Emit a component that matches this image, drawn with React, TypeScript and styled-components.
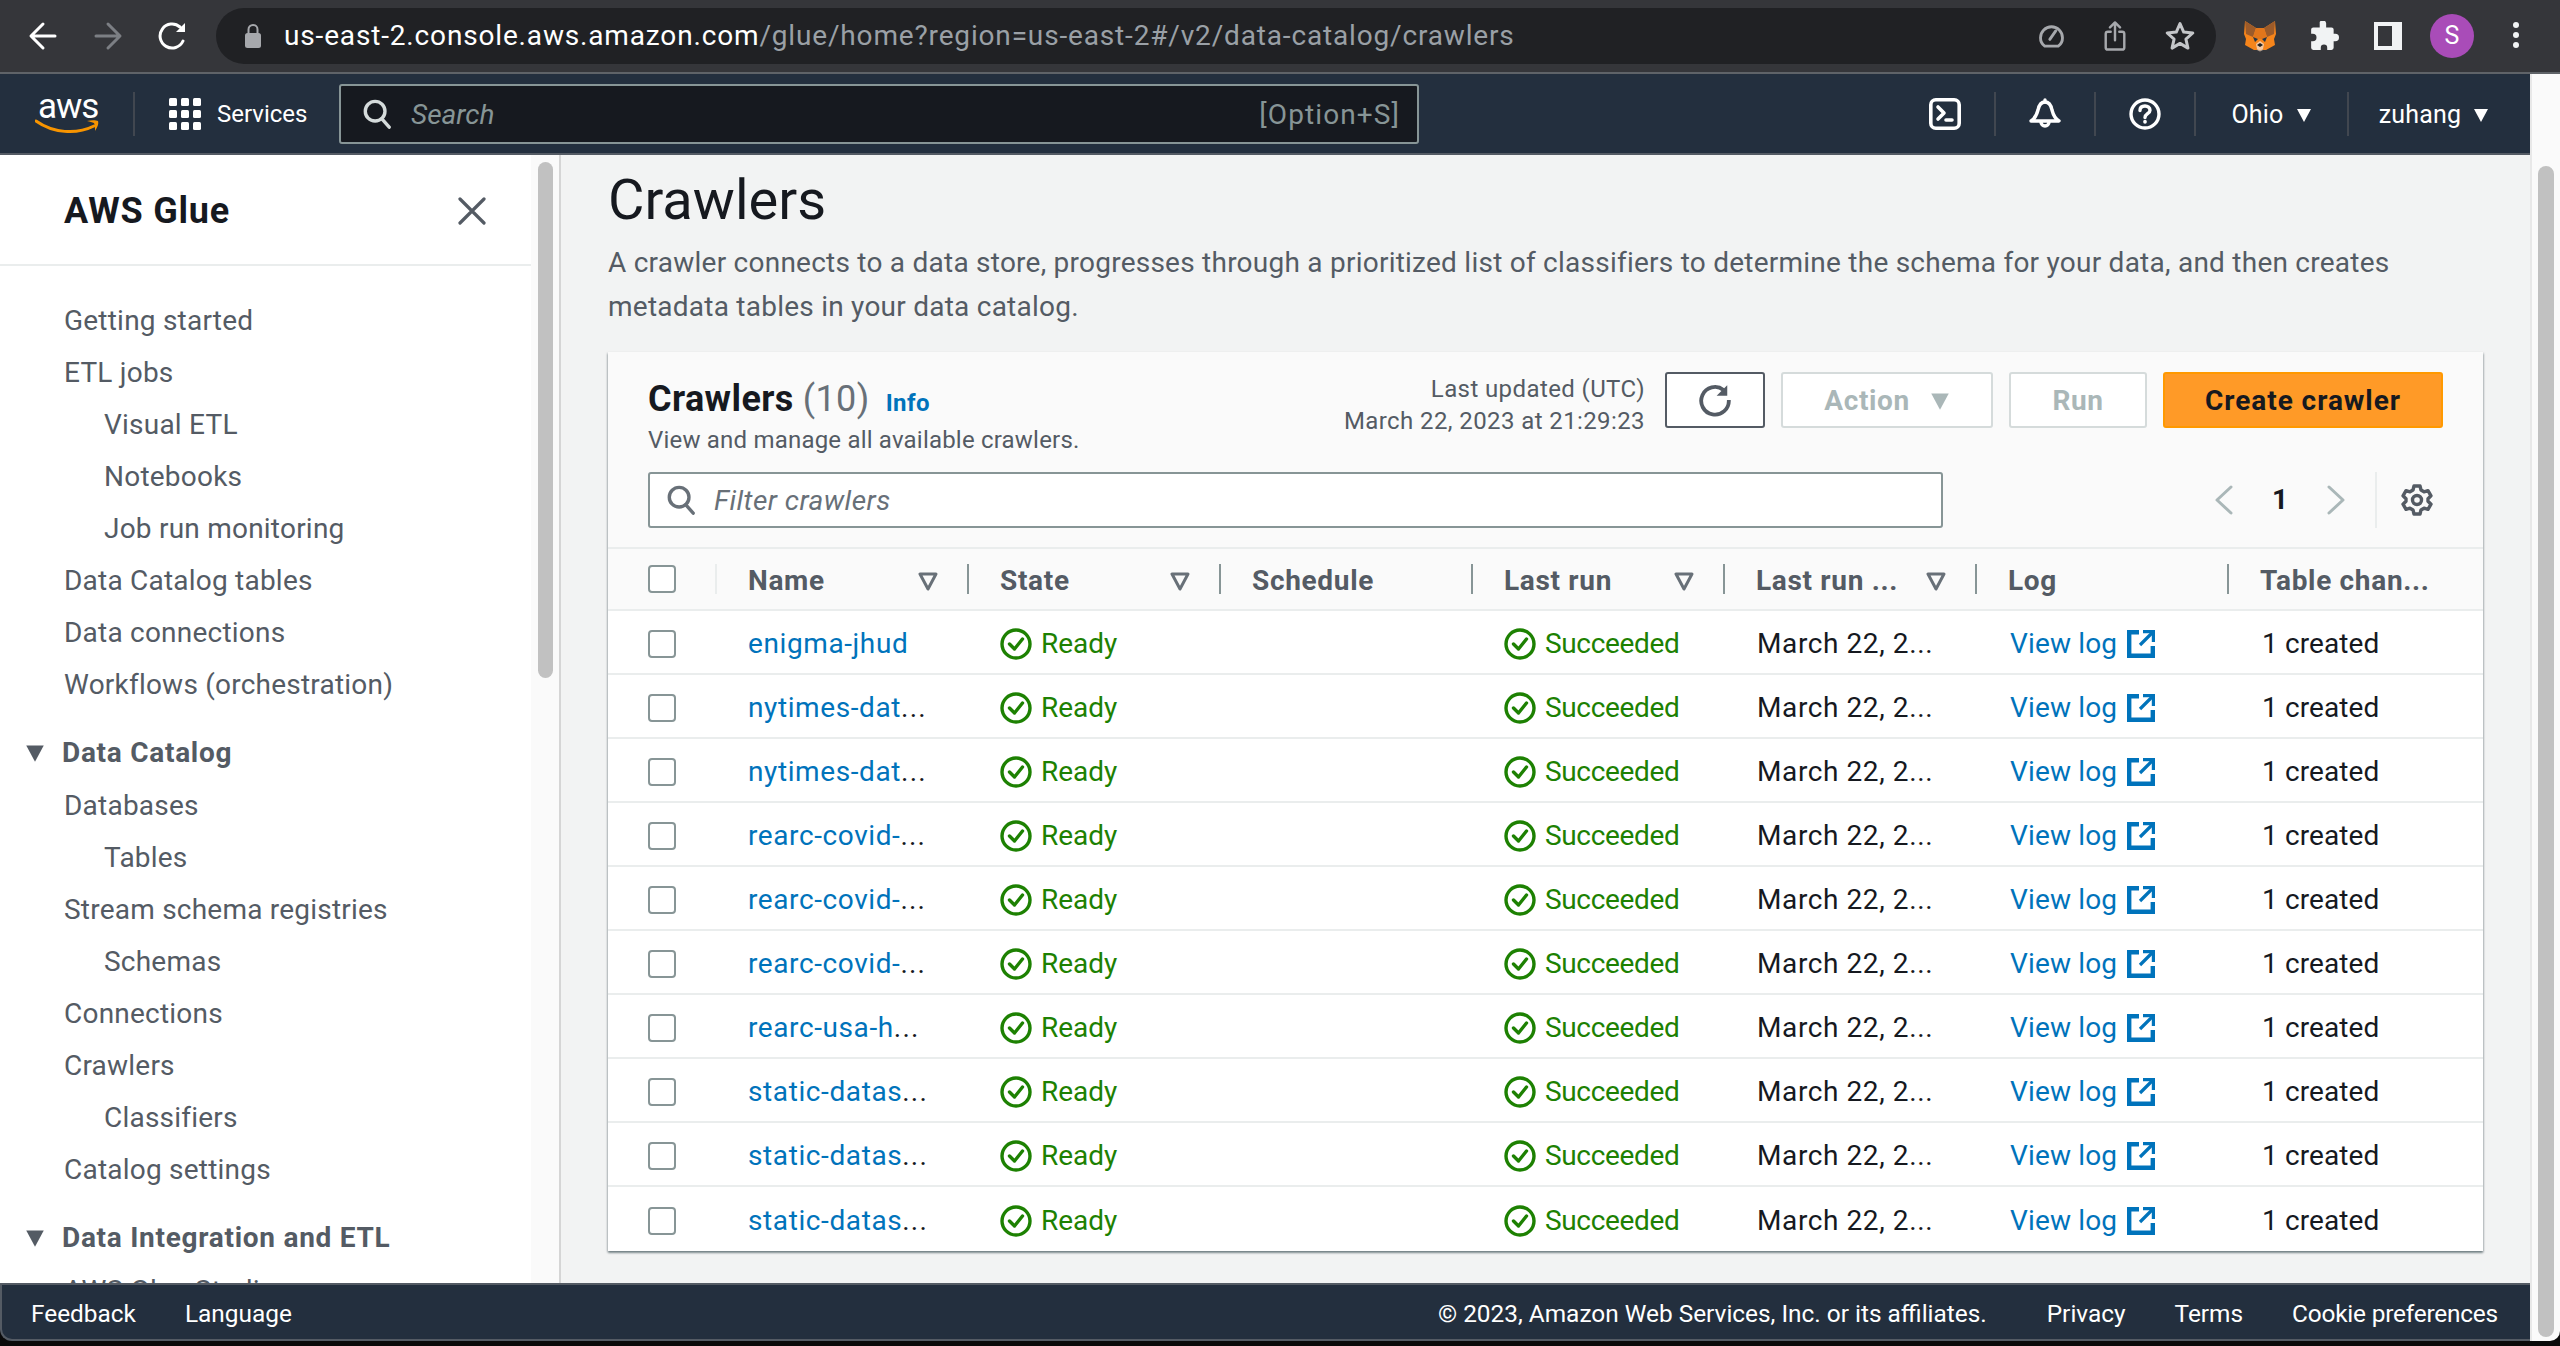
import React from "react";
import styled, { createGlobalStyle } from "styled-components";

const UI = `Roboto, "Open Sans", "Liberation Sans", sans-serif`;

const Global = createGlobalStyle`
  html, body { margin: 0; padding: 0; background: #000; }
  body { font-family: ${UI}; color: #16191f; overflow: hidden; }
  * { box-sizing: border-box; }
`;

const App_ = styled.div`
  width: 2560px;
  height: 1346px;
  display: flex;
  flex-direction: column;
  background: #0a0a0a;
  overflow: hidden;
`;

/* Browser chrome */
const ChromeBar = styled.div`
  height: 74px;
  flex: none;
  display: flex;
  align-items: flex-start;
  padding-top: 8px;
  background: #35363a;
  border-bottom: 2px solid #5f6368;
`;
const NavIcons = styled.div`
  width: 216px;
  height: 56px;
  flex: none;
  display: flex;
  align-items: center;
  padding-left: 28px;
  gap: 35px;
`;
const Pill = styled.div`
  width: 2000px;
  height: 56px;
  flex: none;
  display: flex;
  align-items: center;
  background: #202124;
  border-radius: 28px;
  padding: 0 21px 0 28px;
`;
const UrlText = styled.div`
  flex: 1;
  margin-left: 22px;
  font: 400 28px/56px Roboto, sans-serif;
  letter-spacing: 0.84px;
  color: #9aa0a6;
  white-space: nowrap;
`;
const UrlHost = styled.span`
  color: #fff;
`;
const PillIcons = styled.div`
  display: flex;
  align-items: center;
  gap: 38px;
`;
const ExtIcons = styled.div`
  flex: 1;
  height: 56px;
  display: flex;
  align-items: center;
  padding-left: 12px;
`;
const ExtCell = styled.div`
  width: 64px;
  flex: none;
  display: flex;
  align-items: center;
  justify-content: center;
`;
const Avatar = styled.div`
  width: 44px;
  height: 44px;
  flex: none;
  border-radius: 50%;
  background: #a94cb8;
  color: #fff;
  font: 400 25px/44px Roboto, sans-serif;
  text-align: center;
`;

/* Page structure */
const Shell = styled.div`
  flex: 1;
  min-height: 0;
  display: flex;
  padding-bottom: 5px;
`;
const Column = styled.div`
  width: 2530px;
  flex: none;
  display: flex;
  flex-direction: column;
`;
const PageTrack = styled.div`
  flex: 1;
  background: #fafafa;
  border-left: 2px solid #e8e8e8;
  padding: 92px 6px 4px 6px;
  border-bottom-right-radius: 10px;
`;
const PageThumb = styled.div`
  height: 100%;
  border-radius: 8px;
  background: #c1c1c1;
`;

/* Top navigation */
const TopNav = styled.header`
  height: 81px;
  flex: none;
  display: flex;
  align-items: center;
  background: #232f3e;
  border-bottom: 2px solid #545b64;
`;
const Logo = styled.div`
  width: 98px;
  height: 44px;
  margin-left: 35px;
  flex: none;
  display: flex;
  flex-direction: column;
  align-items: flex-start;
  color: #fff;
`;
const LogoWord = styled.span`
  font: 400 35px/30px Roboto, sans-serif;
  letter-spacing: -1px;
  margin-left: 3px;
  height: 27px;
`;
const Sep = styled.span`
  width: 2px;
  height: 44px;
  flex: none;
  background: #414750;
`;
const Services = styled.div`
  width: 204px;
  flex: none;
  display: flex;
  align-items: center;
  gap: 16px;
  padding-left: 34px;
  font: 400 24px/32px Roboto, sans-serif;
  color: #fff;
`;
const SearchBox = styled.div`
  width: 1080px;
  height: 60px;
  flex: none;
  display: flex;
  align-items: center;
  background: #16191f;
  border: 2px solid #879596;
  border-radius: 3px;
  padding: 0 17px 0 21px;
`;
const SearchHint = styled.span`
  flex: 1;
  margin-left: 19px;
  padding-top: 2px;
  font: italic 400 28px/32px Roboto, sans-serif;
  color: #879596;
`;
const SearchKey = styled.span`
  padding-top: 2px;
  font: 400 28px/32px Roboto, sans-serif;
  letter-spacing: 1.1px;
  color: #879596;
`;
const NavRight = styled.div`
  flex: 1;
  display: flex;
  align-items: center;
  padding-left: 477px;
`;
const NavIconCell = styled.div`
  width: 98px;
  height: 44px;
  flex: none;
  display: flex;
  align-items: center;
  justify-content: center;
`;
const NavMenu = styled.div<{ $w: number }>`
  width: ${(p) => p.$w}px;
  flex: none;
  display: flex;
  align-items: center;
  justify-content: center;
  gap: 12px;
  padding-top: 2px;
  font: 400 25px/32px Roboto, sans-serif;
  letter-spacing: 0.2px;
  color: #fff;
`;

/* Middle */
const Middle = styled.div`
  flex: 1;
  min-height: 0;
  display: flex;
`;
const Sidebar = styled.aside`
  width: 531px;
  flex: none;
  background: #fff;
  overflow: hidden;
`;
const SideHead = styled.div`
  height: 111px;
  display: flex;
  align-items: center;
  justify-content: space-between;
  padding: 2px 45px 0 64px;
  border-bottom: 2px solid #eaeded;
  font: 700 36px/44px Roboto, sans-serif;
  letter-spacing: 0.8px;
`;
const SideNav = styled.nav`
  padding-top: 29px;
`;
const NavItem = styled.div<{ $indent?: boolean }>`
  height: 52px;
  padding-left: ${(p) => (p.$indent ? 104 : 64)}px;
  font: 400 28px/52px Roboto, sans-serif;
  letter-spacing: 0.22px;
  color: #545b64;
  white-space: nowrap;
`;
const NavGroup = styled.div`
  height: 54px;
  margin-top: 15px;
  padding-left: 25px;
  display: flex;
  align-items: center;
  gap: 17px;
  font: 700 28px/52px Roboto, sans-serif;
  letter-spacing: 0.72px;
  color: #545b64;
  white-space: nowrap;
`;
const SideTrack = styled.div`
  width: 30px;
  flex: none;
  background: #fafafa;
  border-right: 2px solid #d5d5d5;
  padding: 7px 6px 0 7px;
`;
const SideThumb = styled.div`
  height: 516px;
  border-radius: 8px;
  background: #c1c1c1;
`;
const Main = styled.main`
  flex: 1;
  min-width: 0;
  background: #f2f3f3;
  padding: 9px 47px 0;
  overflow: hidden;
`;
const PageTitle = styled.h1`
  margin: 0;
  font: 400 56px/72px Roboto, sans-serif;
  color: #16191f;
`;
const PageDesc = styled.p`
  margin: 5px 0 23px;
  font: 400 28px/44px Roboto, sans-serif;
  letter-spacing: 0.24px;
  color: #545b64;
  white-space: nowrap;
`;

/* Card */
const Card = styled.section`
  background: #fff;
  box-shadow: 0 2px 2px rgba(0, 28, 36, 0.4), 1px 1px 2px rgba(0, 28, 36, 0.15), -1px 1px 2px rgba(0, 28, 36, 0.15);
`;
const CardHead = styled.div`
  background: #fafafa;
  height: 197px;
  padding: 18px 40px 0;
  border-bottom: 2px solid #eaeded;
`;
const HeadTop = styled.div`
  height: 102px;
  display: flex;
  justify-content: space-between;
  align-items: flex-start;
`;
const TitleBlock = styled.div`
  display: flex;
  flex-direction: column;
  padding-top: 3px;
`;
const CardTitle = styled.div`
  display: flex;
  align-items: baseline;
  font: 700 36px/52px Roboto, sans-serif;
  letter-spacing: 0.4px;
  color: #16191f;
`;
const Count = styled.span`
  font-weight: 400;
  color: #687078;
  margin-left: 9px;
`;
const InfoLink = styled.span`
  margin-left: 16px;
  font: 700 24px/32px Roboto, sans-serif;
  letter-spacing: 0.4px;
  color: #0073bb;
`;
const CardSub = styled.div`
  margin-top: -1px;
  font: 400 24px/32px Roboto, sans-serif;
  letter-spacing: 0.2px;
  color: #545b64;
`;
const Actions = styled.div`
  display: flex;
  align-items: flex-start;
  padding-top: 2px;
  gap: 16px;
`;
const Updated = styled.div`
  text-align: right;
  margin-right: 4px;
  padding-top: 1px;
  font: 400 24px/32px Roboto, sans-serif;
  letter-spacing: 0.4px;
  color: #545b64;
`;
const Btn = styled.div<{ $w: number; $kind: "normal" | "disabled" | "primary" }>`
  width: ${(p) => p.$w}px;
  height: 56px;
  flex: none;
  display: flex;
  align-items: center;
  justify-content: center;
  gap: 20px;
  padding-top: ${(p) => (p.$kind === "normal" ? 0 : 2)}px;
  border-radius: 3px;
  font: 700 28px/32px Roboto, sans-serif;
  letter-spacing: ${(p) => (p.$kind === "primary" ? 0.95 : 0.6)}px;
  border: 2px solid
    ${(p) => (p.$kind === "normal" ? "#545b64" : p.$kind === "disabled" ? "#d5dbdb" : "#ff9900")};
  color: ${(p) => (p.$kind === "disabled" ? "#aab7b8" : "#16191f")};
  background: ${(p) => (p.$kind === "primary" ? "#ff9a27" : "#fff")};
`;
const HeadBottom = styled.div`
  height: 56px;
  display: flex;
  align-items: center;
`;
const Filter = styled.div`
  width: 1295px;
  height: 56px;
  flex: none;
  display: flex;
  align-items: center;
  gap: 18px;
  padding: 0 16px;
  background: #fff;
  border: 2px solid #879596;
  border-radius: 3px;
`;
const FilterHint = styled.span`
  padding-top: 2px;
  font: italic 400 28px/32px Roboto, sans-serif;
  letter-spacing: 0.45px;
  color: #687078;
`;
const Pager = styled.div`
  flex: 1;
  display: flex;
  align-items: center;
  justify-content: flex-end;
  height: 56px;
`;
const PageNo = styled.span`
  width: 92px;
  text-align: center;
  font: 700 28px/32px Roboto, sans-serif;
  color: #16191f;
`;
const PrefCell = styled.div`
  width: 68px;
  margin-left: 29px;
  padding-right: 10px;
  height: 56px;
  border-left: 2px solid #eaeded;
  display: flex;
  align-items: center;
  justify-content: flex-end;
`;

/* Table */
const GridRow = styled.div`
  display: grid;
  grid-template-columns: 107px repeat(6, 252px) 1fr;
  height: 64px;
  padding-top: 4px;
  align-items: center;
  border-bottom: 2px solid #eaeded;
  &:last-child {
    border-bottom: none;
  }
`;
const HeadRow = styled.div`
  display: grid;
  grid-template-columns: 107px repeat(6, 252px) 1fr;
  height: 62px;
  align-items: center;
  background: #fafafa;
  border-bottom: 2px solid #eaeded;
`;
const CheckCell = styled.div`
  padding-left: 40px;
  display: flex;
`;
const Check = styled.span`
  width: 28px;
  height: 28px;
  display: block;
  background: #fff;
  border: 2px solid #879596;
  border-radius: 4px;
`;
const HeadCell = styled.div<{ $faint?: boolean }>`
  height: 30px;
  display: flex;
  align-items: center;
  justify-content: space-between;
  padding: 3px 29px 0 31px;
  border-left: 2px solid ${(p) => (p.$faint ? "#eaeded" : "#879596")};
  font: 700 28px/30px Roboto, sans-serif;
  letter-spacing: 0.68px;
  color: #545b64;
  white-space: nowrap;
`;
const Cell = styled.div`
  display: flex;
  align-items: center;
  padding-left: 33px;
  font: 400 28px/32px Roboto, sans-serif;
  color: #16191f;
  white-space: nowrap;
`;
const DateCell = styled(Cell)`
  padding-left: 34px;
  letter-spacing: 0.6px;
`;
const CreatedCell = styled(Cell)`
  padding-left: 35px;
  letter-spacing: 0.1px;
`;
const RowLink = styled.span`
  color: #0073bb;
  letter-spacing: 0.6px;
`;
const Cut = styled.span`
  letter-spacing: 1.2px;
`;
const Status = styled.span<{ $tight?: boolean }>`
  display: flex;
  align-items: center;
  gap: 9px;
  color: #1d8102;
  letter-spacing: ${(p) => (p.$tight ? -0.35 : 0)}px;
`;
const LogLink = styled.span`
  display: flex;
  align-items: center;
  gap: 10px;
  margin-left: 2px;
  letter-spacing: 0.15px;
  color: #0073bb;
`;

/* Footer */
const Footer = styled.footer`
  height: 58px;
  flex: none;
  display: flex;
  align-items: center;
  justify-content: space-between;
  padding: 3px 32px 0 29px;
  background: #232f3e;
  border-top: 2px solid #545b64;
  border-bottom: 2px solid #545b64;
  border-left: 2px solid #545b64;
  border-bottom-left-radius: 12px;
  font: 400 24.4px/32px Roboto, sans-serif;
  color: #fff;
`;
const FootGroup = styled.div`
  display: flex;
  gap: 49px;
`;
const Copyright = styled.span`
  margin-right: 11px;
`;
const CookieLink = styled.span`
  letter-spacing: -0.2px;
`;

const Back = ({ c = "#fff" }: { c?: string }) => (
  <svg width="30" height="30" viewBox="0 0 30 30" fill="none" stroke={c} strokeWidth="3" strokeLinecap="round" strokeLinejoin="round">
    <path d="M27 15H4M15 3 3 15l12 12" />
  </svg>
);
const Fwd = () => (
  <svg width="30" height="30" viewBox="0 0 30 30" fill="none" stroke="#7c7f84" strokeWidth="3" strokeLinecap="round" strokeLinejoin="round">
    <path d="M3 15h23M15 3l12 12-12 12" />
  </svg>
);
const Reload = () => (
  <svg width="30" height="30" viewBox="0 0 30 30" fill="none" stroke="#fff" strokeWidth="3" strokeLinecap="round">
    <path d="M25 20A12 12 0 1 1 22 6" />
    <path d="M27 2v9h-9z" fill="#fff" stroke="none" />
  </svg>
);
const Lock = () => (
  <svg width="18" height="26" viewBox="0 0 18 26">
    <path d="M4.5 10V6.5a4.5 4.5 0 0 1 9 0V10" fill="none" stroke="#a6a8ac" strokeWidth="2" />
    <rect x="1" y="10" width="16" height="15" rx="2.5" fill="#a6a8ac" />
  </svg>
);
const Gauge = () => (
  <svg width="27" height="24" viewBox="0 0 32 28" fill="none" stroke="#a6a8ac" strokeWidth="3.4" strokeLinecap="round">
    <path d="M8 26h16a12 12 0 0 0 5-10A13 13 0 1 0 3 16a12 12 0 0 0 5 10z" />
    <path d="M14 18 21 8" />
  </svg>
);
const Share = () => (
  <svg width="24" height="30" viewBox="0 0 32 42" fill="none" stroke="#a6a8ac" strokeWidth="3.4" strokeLinecap="round" strokeLinejoin="round">
    <path d="M10 15H6a3 3 0 0 0-3 3v19a3 3 0 0 0 3 3h20a3 3 0 0 0 3-3V18a3 3 0 0 0-3-3h-4" />
    <path d="M16 27V3M9 9l7-7 7 7" />
  </svg>
);
const Star = () => (
  <svg width="30" height="30" viewBox="0 0 34 34" fill="none" stroke="#c4c6c9" strokeWidth="3.4" strokeLinejoin="round">
    <path d="m17 3 4.2 9.6 10.3 1-7.8 6.9 2.3 10.2L17 25.4l-9 5.3 2.3-10.2-7.8-6.9 10.3-1z" />
  </svg>
);
const Fox = () => (
  <svg width="32" height="32" viewBox="0 0 32 32">
    <path d="M1 1 12 8h8L31 1l1 13-2 5 1 6-9 5h-12l-9-5 1-6-2-5z" fill="#f6851b" />
    <path d="M1 1 12 8 9 17 2 14z" fill="#9c5b2a" />
    <path d="M31 1 20 8l3 9 7-3z" fill="#9c5b2a" />
    <path d="M12 8h8l3 9-5 2h-4l-5-2z" fill="#e2761b" />
    <path d="m9 17 5 2-3 3z M23 17l-5 2 3 3z" fill="#233447" />
    <path d="m12 24 4-3 4 3-1 5-3 2-3-2z" fill="#f8c9a0" />
    <path d="m13 25 3-2 3 2-3 2z" fill="#222" />
    <path d="m13 29 3 2 3-2v1l-3 1.5-3-1.5z" fill="#c0ad9e" />
  </svg>
);
const Puzzle = () => (
  <svg width="30" height="30" viewBox="0 0 28 28" fill="#f1f3f4">
    <path d="M10 1a3.2 3.2 0 0 1 6 1v4h5a2 2 0 0 1 2 2v4h1.5a3.5 3.5 0 0 1 0 7H23v6a2 2 0 0 1-2 2h-4v-2a3 3 0 0 0-6 0v2H4a2 2 0 0 1-2-2v-6h1.5a3.5 3.5 0 0 0 0-7H2V8a2 2 0 0 1 2-2h6z" />
  </svg>
);
const Panel = () => (
  <svg width="28" height="28" viewBox="0 0 28 28">
    <path fillRule="evenodd" d="M0 0h28v28H0zM4 4v20h14V4z" fill="#f1f3f4" />
  </svg>
);
const Dots = () => (
  <svg width="6" height="28" viewBox="0 0 6 28" fill="#f1f3f4">
    <circle cx="3" cy="3" r="3" />
    <circle cx="3" cy="13" r="3" />
    <circle cx="3" cy="23" r="3" />
  </svg>
);
const Smile = () => (
  <svg width="64" height="16" viewBox="0 0 64 16" fill="none">
    <path d="M1 2c17 12 40 14 58 5" stroke="#f79400" strokeWidth="3" strokeLinecap="round" />
    <path d="M52 2c4-1 9-1 11 0 1 3-1 7-3 10 0-3 0-6-1-8-2-1-4-1-7-2z" fill="#f79400" />
  </svg>
);
const GridDots = () => (
  <svg width="32" height="32" viewBox="0 0 32 32" fill="#fff">
    {[0, 12, 24].flatMap((y) =>
      [0, 12, 24].map((x) => <rect key={`${x}-${y}`} x={x} y={y} width="8" height="8" rx="1.5" />)
    )}
  </svg>
);
const SearchIcon = ({ c, s = 32 }: { c: string; s?: number }) => (
  <svg width={s} height={s} viewBox="0 0 32 32" fill="none" stroke={c} strokeWidth="3.6" strokeLinecap="round">
    <circle cx="14" cy="13" r="10.5" />
    <path d="m21 21 8 9" />
  </svg>
);
const ConsoleIcon = () => (
  <svg width="32" height="32" viewBox="0 0 32 32" fill="none" stroke="#fff" strokeWidth="3.6" strokeLinecap="round" strokeLinejoin="round">
    <rect x="1.8" y="1.8" width="28.4" height="28.4" rx="5" />
    <path d="m9 9 6 6-6 6M17 22h6" />
  </svg>
);
const BellIcon = () => (
  <svg width="32" height="32" viewBox="0 0 32 32" fill="none" stroke="#fff" strokeWidth="3.4" strokeLinecap="round" strokeLinejoin="round">
    <path d="M2 23c5-3 6-7 7-11 1-5 3-8 7-8s6 3 7 8c1 4 2 8 7 11z" />
    <path d="M12 24a4 4 0 1 0 8 0" />
    <path d="M16 2v2" />
  </svg>
);
const HelpIcon = () => (
  <svg width="32" height="32" viewBox="0 0 32 32" fill="none" stroke="#fff" strokeWidth="3.4" strokeLinecap="round">
    <circle cx="16" cy="16" r="14" />
    <path d="M11 12.5c0-3 2.2-4.5 5-4.5s5 1.7 5 4.2c0 3.5-5 3.5-5 7.3" />
    <path d="M16 23.5v.5" strokeWidth="3.6" />
  </svg>
);
const Caret = ({ c = "#fff", s = 16 }: { c?: string; s?: number }) => (
  <svg width={s} height={s} viewBox="0 0 16 16" fill={c}>
    <path d="M1 2h14L8 15z" />
  </svg>
);
const CloseIcon = () => (
  <svg width="28" height="28" viewBox="0 0 28 28" fill="none" stroke="#545b64" strokeWidth="3.2" strokeLinecap="round">
    <path d="m2 2 24 24M26 2 2 26" />
  </svg>
);
const Refresh = () => (
  <svg width="34" height="34" viewBox="0 0 32 32" fill="none" stroke="#545b64" strokeWidth="3.6">
    <path d="M24 6.5A13 13 0 1 0 29 16" />
    <path d="M27.5 2v10h-10z" fill="#545b64" stroke="none" />
  </svg>
);
const ChevronL = ({ flip }: { flip?: boolean }) => (
  <svg width="20" height="30" viewBox="0 0 20 30" fill="none" stroke="#aab7b8" strokeWidth="3" strokeLinecap="round" strokeLinejoin="round">
    <path d={flip ? "m3 2 14 13L3 28" : "M17 2 3 15l14 13"} />
  </svg>
);
const Gear = () => (
  <svg width="32" height="32" viewBox="0 0 32 32" fill="none" stroke="#545b64" strokeWidth="3.4" strokeLinejoin="round">
    <path d="m13 2h6l1 4 3 1.8 4-1.2 3 5.2-3 3v2.4l3 3-3 5.2-4-1.2-3 1.8-1 4h-6l-1-4-3-1.8-4 1.2-3-5.2 3-3v-2.4l-3-3 3-5.2 4 1.2 3-1.8z" />
    <circle cx="16" cy="16" r="4.5" />
  </svg>
);
const SortIcon = () => (
  <svg width="20" height="20" viewBox="0 0 20 20" fill="none" stroke="#687078" strokeWidth="3" strokeLinejoin="round">
    <path d="M2 3h16l-8 15z" />
  </svg>
);
const CheckCircle = () => (
  <svg width="32" height="32" viewBox="0 0 32 32" fill="none" stroke="#1d8102" strokeWidth="3.4" strokeLinecap="round" strokeLinejoin="round">
    <circle cx="16" cy="16" r="14" />
    <path d="m9.5 16 5 5 8-10" />
  </svg>
);
const ExtLink = () => (
  <svg width="28" height="28" viewBox="0 0 28 28" fill="none" stroke="#0073bb" strokeWidth="4.4" strokeLinecap="butt">
    <path d="M12 2.2H2.2v23.6h23.6V16" />
    <path d="M13 15 25 3" strokeWidth="3.2" />
    <path d="M16 1.6h10.4V12" strokeWidth="3.2" />
  </svg>
);

type Nav = { t: string; k: "item" | "sub" | "group" };
const NAV: Nav[] = [
  { t: "Getting started", k: "item" },
  { t: "ETL jobs", k: "item" },
  { t: "Visual ETL", k: "sub" },
  { t: "Notebooks", k: "sub" },
  { t: "Job run monitoring", k: "sub" },
  { t: "Data Catalog tables", k: "item" },
  { t: "Data connections", k: "item" },
  { t: "Workflows (orchestration)", k: "item" },
  { t: "Data Catalog", k: "group" },
  { t: "Databases", k: "item" },
  { t: "Tables", k: "sub" },
  { t: "Stream schema registries", k: "item" },
  { t: "Schemas", k: "sub" },
  { t: "Connections", k: "item" },
  { t: "Crawlers", k: "item" },
  { t: "Classifiers", k: "sub" },
  { t: "Catalog settings", k: "item" },
  { t: "Data Integration and ETL", k: "group" },
  { t: "AWS Glue Studio", k: "item" },
];

const ROWS: { name: string; cut: boolean }[] = [
  { name: "enigma-jhud", cut: false },
  { name: "nytimes-dat", cut: true },
  { name: "nytimes-dat", cut: true },
  { name: "rearc-covid-", cut: true },
  { name: "rearc-covid-", cut: true },
  { name: "rearc-covid-", cut: true },
  { name: "rearc-usa-h", cut: true },
  { name: "static-datas", cut: true },
  { name: "static-datas", cut: true },
  { name: "static-datas", cut: true },
];

export default function App() {
  return (
    <App_>
      <Global />
      <ChromeBar>
        <NavIcons>
          <Back />
          <Fwd />
          <Reload />
        </NavIcons>
        <Pill>
          <Lock />
          <UrlText>
            <UrlHost>us-east-2.console.aws.amazon.com</UrlHost>/glue/home?region=us-east-2#/v2/data-catalog/crawlers
          </UrlText>
          <PillIcons>
            <Gauge />
            <Share />
            <Star />
          </PillIcons>
        </Pill>
        <ExtIcons>
          <ExtCell><Fox /></ExtCell>
          <ExtCell><Puzzle /></ExtCell>
          <ExtCell><Panel /></ExtCell>
          <ExtCell><Avatar>S</Avatar></ExtCell>
          <ExtCell><Dots /></ExtCell>
        </ExtIcons>
      </ChromeBar>
      <Shell>
        <Column>
          <TopNav>
            <Logo>
              <LogoWord>aws</LogoWord>
              <Smile />
            </Logo>
            <Sep />
            <Services>
              <GridDots />
              Services
            </Services>
            <SearchBox>
              <SearchIcon c="#d5dbdb" s={30} />
              <SearchHint>Search</SearchHint>
              <SearchKey>[Option+S]</SearchKey>
            </SearchBox>
            <NavRight>
              <NavIconCell><ConsoleIcon /></NavIconCell>
              <Sep />
              <NavIconCell><BellIcon /></NavIconCell>
              <Sep />
              <NavIconCell><HelpIcon /></NavIconCell>
              <Sep />
              <NavMenu $w={151}>Ohio <Caret /></NavMenu>
              <Sep />
              <NavMenu $w={170}>zuhang <Caret /></NavMenu>
            </NavRight>
          </TopNav>
          <Middle>
            <Sidebar>
              <SideHead>
                AWS Glue
                <CloseIcon />
              </SideHead>
              <SideNav>
                {NAV.map((n) =>
                  n.k === "group" ? (
                    <NavGroup key={n.t}>
                      <Caret c="#545b64" s={20} />
                      {n.t}
                    </NavGroup>
                  ) : (
                    <NavItem key={n.t} $indent={n.k === "sub"}>{n.t}</NavItem>
                  )
                )}
              </SideNav>
            </Sidebar>
            <SideTrack><SideThumb /></SideTrack>
            <Main>
              <PageTitle>Crawlers</PageTitle>
              <PageDesc>
                A crawler connects to a data store, progresses through a prioritized list of classifiers to determine the schema for your data, and then creates
                <br />
                metadata tables in your data catalog.
              </PageDesc>
              <Card>
                <CardHead>
                  <HeadTop>
                    <TitleBlock>
                      <CardTitle>
                        Crawlers<Count>(10)</Count>
                        <InfoLink>Info</InfoLink>
                      </CardTitle>
                      <CardSub>View and manage all available crawlers.</CardSub>
                    </TitleBlock>
                    <Actions>
                      <Updated>
                        Last updated (UTC)
                        <br />
                        March 22, 2023 at 21:29:23
                      </Updated>
                      <Btn $w={100} $kind="normal"><Refresh /></Btn>
                      <Btn $w={212} $kind="disabled">Action <Caret c="#aab7b8" s={20} /></Btn>
                      <Btn $w={138} $kind="disabled">Run</Btn>
                      <Btn $w={280} $kind="primary">Create crawler</Btn>
                    </Actions>
                  </HeadTop>
                  <HeadBottom>
                    <Filter>
                      <SearchIcon c="#687078" s={30} />
                      <FilterHint>Filter crawlers</FilterHint>
                    </Filter>
                    <Pager>
                      <ChevronL />
                      <PageNo>1</PageNo>
                      <ChevronL flip />
                      <PrefCell><Gear /></PrefCell>
                    </Pager>
                  </HeadBottom>
                </CardHead>
                <HeadRow>
                  <CheckCell><Check /></CheckCell>
                  <HeadCell $faint>Name <SortIcon /></HeadCell>
                  <HeadCell>State <SortIcon /></HeadCell>
                  <HeadCell>Schedule</HeadCell>
                  <HeadCell>Last run <SortIcon /></HeadCell>
                  <HeadCell>Last run ... <SortIcon /></HeadCell>
                  <HeadCell>Log</HeadCell>
                  <HeadCell>Table chan...</HeadCell>
                </HeadRow>
                {ROWS.map((r, i) => (
                  <GridRow key={i}>
                    <CheckCell><Check /></CheckCell>
                    <Cell>
                      <RowLink>{r.name}</RowLink>
                      {r.cut ? <Cut>...</Cut> : null}
                    </Cell>
                    <Cell><Status><CheckCircle />Ready</Status></Cell>
                    <Cell />
                    <Cell><Status $tight><CheckCircle />Succeeded</Status></Cell>
                    <DateCell>March 22, 2...</DateCell>
                    <Cell><LogLink>View log <ExtLink /></LogLink></Cell>
                    <CreatedCell>1 created</CreatedCell>
                  </GridRow>
                ))}
              </Card>
            </Main>
          </Middle>
          <Footer>
            <FootGroup>
              <span>Feedback</span>
              <span>Language</span>
            </FootGroup>
            <FootGroup>
              <Copyright>© 2023, Amazon Web Services, Inc. or its affiliates.</Copyright>
              <span>Privacy</span>
              <span>Terms</span>
              <CookieLink>Cookie preferences</CookieLink>
            </FootGroup>
          </Footer>
        </Column>
        <PageTrack><PageThumb /></PageTrack>
      </Shell>
    </App_>
  );
}
